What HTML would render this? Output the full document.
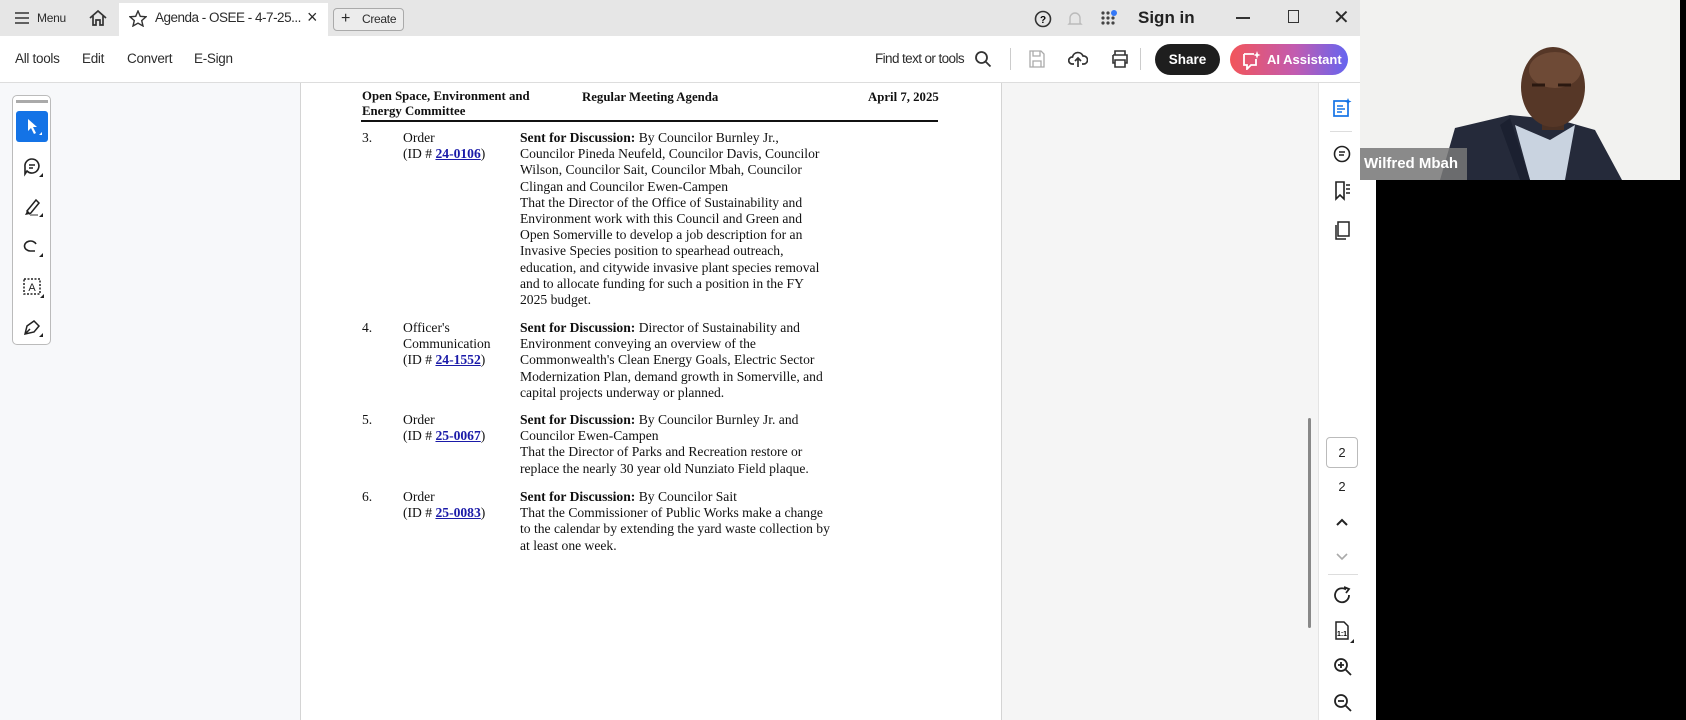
<!DOCTYPE html>
<html><head><meta charset="utf-8"><style>
*{margin:0;padding:0;box-sizing:border-box}
body{width:1686px;height:720px;overflow:hidden;position:relative;background:#fff;font-family:"Liberation Sans",sans-serif;color:#222}
.a{position:absolute}
.ui{font-size:13.5px;color:#2c2c2c;letter-spacing:-0.3px}
.doc{font-family:"Liberation Serif",serif;font-size:13.6px;line-height:16.2px;color:#111;white-space:nowrap}
.doc b{font-weight:bold}
.lk{color:#1a1aa8;text-decoration:underline;font-weight:bold}
svg{position:absolute}
</style></head><body>
<!-- tab bar -->
<div class="a" style="left:0;top:0;width:1360px;height:36px;background:#e6e6e6"></div>
<div class="a" style="left:119px;top:3px;width:209px;height:33px;background:#fff"></div>
<svg style="left:14px;top:11px" width="16" height="14"><path d="M1 2H15M1 7H15M1 12H15" stroke="#333" stroke-width="1.6"/></svg>
<div class="a ui" style="left:37px;top:11px;font-size:12px">Menu</div>
<svg style="left:88px;top:9px" width="20" height="18"><path d="M2 9L10 2L18 9M5 7V16H8V11H12V16H15V7" stroke="#333" stroke-width="1.7" fill="none"/></svg>
<svg style="left:129px;top:10px" width="18" height="17"><path d="M9 1L11.3 6.3L17 6.8L12.7 10.6L14 16L9 13.2L4 16L5.3 10.6L1 6.8L6.7 6.3Z" stroke="#333" stroke-width="1.4" fill="none"/></svg>
<div class="a ui" style="left:155px;top:10px;font-size:13.5px;letter-spacing:-0.5px">Agenda - OSEE - 4-7-25...</div>
<div class="a ui" style="left:307px;top:7px;font-size:18px">×</div>
<div class="a" style="left:333px;top:8px;width:71px;height:23px;border:1px solid #aaa;border-radius:4px;background:#ececec"></div>
<div class="a ui" style="left:341px;top:10px;font-size:16px">+</div>
<div class="a ui" style="left:362px;top:12px;font-size:12px">Create</div>
<svg style="left:1034px;top:10px" width="18" height="18"><circle cx="9" cy="9" r="7.5" stroke="#333" stroke-width="1.6" fill="none"/><text x="9" y="13" font-size="10" font-weight="bold" text-anchor="middle" font-family="Liberation Sans">?</text></svg>
<svg style="left:1067px;top:10px" width="16" height="18"><path d="M3 13V8A5 5 0 0 1 13 8V13L14 14H2Z" stroke="#bbb" fill="none" stroke-width="1.4"/></svg>
<svg style="left:1100px;top:10px" width="18" height="18"><g fill="#444"><circle cx="3" cy="3" r="1.6"/><circle cx="8" cy="3" r="1.6"/><circle cx="3" cy="8" r="1.6"/><circle cx="8" cy="8" r="1.6"/><circle cx="13" cy="8" r="1.6"/><circle cx="3" cy="13" r="1.6"/><circle cx="8" cy="13" r="1.6"/><circle cx="13" cy="13" r="1.6"/></g><circle cx="14" cy="3" r="3" fill="#3478f6"/></svg>
<div class="a" style="left:1138px;top:8px;font-size:17px;font-weight:bold;color:#222">Sign in</div>
<div class="a" style="left:1236px;top:17px;width:14px;height:2px;background:#333"></div>
<div class="a" style="left:1288px;top:10px;width:11px;height:13px;border:1.5px solid #333"></div>
<div class="a ui" style="left:1333px;top:5px;font-size:20px">✕</div>
<!-- toolbar -->
<div class="a" style="left:0;top:82px;width:1360px;height:1px;background:#ddd"></div>
<div class="a ui" style="left:15px;top:51px">All tools</div>
<div class="a ui" style="left:82px;top:51px">Edit</div>
<div class="a ui" style="left:127px;top:51px">Convert</div>
<div class="a ui" style="left:194px;top:51px">E-Sign</div>
<div class="a ui" style="left:875px;top:51px;letter-spacing:-0.6px">Find text or tools</div>
<svg style="left:974px;top:50px" width="18" height="18"><circle cx="7.5" cy="7.5" r="5.5" stroke="#333" stroke-width="1.8" fill="none"/><path d="M11.5 11.5L16.5 16.5" stroke="#333" stroke-width="1.8"/></svg>
<div class="a" style="left:1010px;top:48px;width:1px;height:22px;background:#ccc"></div>
<svg style="left:1029px;top:50px" width="16" height="18"><path d="M1 1H12L15 4V17H1Z M4 1V6H11V1 M4 17V11H12V17" stroke="#aaa" stroke-width="1.3" fill="none"/></svg>
<svg style="left:1068px;top:49px" width="20" height="20"><path d="M6 15H4A3.5 3.5 0 0 1 4.5 8A5.5 5.5 0 0 1 15 7A4 4 0 0 1 16 15H14M10 18V9M7 12L10 9L13 12" stroke="#333" stroke-width="1.7" fill="none"/></svg>
<svg style="left:1110px;top:49px" width="20" height="20"><path d="M5 6V2H15V6M3 6H17V14H15M5 14H3V6M5 11H15V18H5Z" stroke="#333" stroke-width="1.6" fill="none"/></svg>
<div class="a" style="left:1140px;top:48px;width:1px;height:22px;background:#ccc"></div>
<div class="a" style="left:1155px;top:44px;width:65px;height:31px;border-radius:16px;background:#1e1e1e;color:#fff;font-size:13.5px;font-weight:bold;text-align:center;line-height:31px">Share</div>
<div class="a" style="left:1230px;top:44px;width:118px;height:31px;border-radius:16px;background:linear-gradient(90deg,#f2555a,#c25bb0 55%,#6565f0);color:#fff;font-size:13px;font-weight:bold;line-height:31px;padding-left:37px">AI Assistant</div>
<svg style="left:1241px;top:50px" width="20" height="20"><path d="M3 4H13M3 4V15H6V19L10 15H15V9" stroke="#fff" stroke-width="1.8" fill="none"/><path d="M16 1L17 4L19.5 5L17 6L16 9L15 6L12.5 5L15 4Z" fill="#fff"/></svg>
<!-- content -->
<div class="a" style="left:0;top:83px;width:300px;height:637px;background:#f7f8fa"></div>
<div class="a" style="left:300px;top:83px;width:1px;height:637px;background:#d4d4d4"></div>
<div class="a" style="left:1001px;top:83px;width:317px;height:637px;background:#f5f5f5;border-left:1px solid #d4d4d4"></div>
<div class="a" style="left:1308px;top:418px;width:3px;height:210px;background:#888;border-radius:2px"></div>
<div class="a" style="left:1318px;top:83px;width:42px;height:637px;background:#fff;border-left:1px solid #e4e4e4"></div>
<!-- left tools -->
<div class="a" style="left:12px;top:95px;width:39px;height:250px;border:1px solid #bbb;border-radius:5px;background:#fff"></div>
<div class="a" style="left:16px;top:100px;width:32px;height:3px;background:#aaa"></div>
<div class="a" style="left:16px;top:111px;width:32px;height:31px;background:#1473e6;border-radius:3px"></div>
<svg style="left:26px;top:118px" width="18" height="18"><path d="M2 1L2 13L5 10L8 16L10 15L7 9L11 9Z" fill="#fff"/><path d="M16 14V17H13Z" fill="#fff"/></svg>
<svg style="left:22px;top:157px" width="24" height="22"><path d="M10 2A7 7 0 1 1 5 14L3 17L3 10A7 7 0 0 1 10 2Z" stroke="#222" stroke-width="1.6" fill="none"/><path d="M7 8H13M7 11H11" stroke="#222" stroke-width="1.5"/><path d="M21 16V20H17Z" fill="#222"/></svg>
<svg style="left:22px;top:197px" width="24" height="22"><path d="M5 14L14 3L17 6L8 17Z" stroke="#222" stroke-width="1.5" fill="none"/><path d="M3 18L5 14L8 17Z" fill="#222"/><path d="M8 18H16" stroke="#999" stroke-width="2"/><path d="M21 16V20H17Z" fill="#222"/></svg>
<svg style="left:22px;top:237px" width="24" height="22"><path d="M14 7A6 5 0 1 0 8 14H13" stroke="#222" stroke-width="1.6" fill="none"/><path d="M21 16V20H17Z" fill="#222"/></svg>
<svg style="left:22px;top:277px" width="24" height="22"><rect x="2" y="2" width="16" height="15" stroke="#222" stroke-width="1.5" stroke-dasharray="2 1.5" fill="none"/><text x="10" y="14" font-size="11" font-family="Liberation Sans" text-anchor="middle" fill="#222">A</text><path d="M22 17V21H18Z" fill="#222"/></svg>
<svg style="left:22px;top:317px" width="24" height="22"><path d="M3 17L5 9L12 4L17 9L12 15Z M3 17L8 12" stroke="#222" stroke-width="1.5" fill="none"/><path d="M21 16V20H17Z" fill="#222"/></svg>
<!-- document -->
<div class="a doc" style="left:362px;top:89px;font-weight:bold;font-size:12.8px;line-height:15.4px">Open Space, Environment and<br>Energy Committee</div>
<div class="a doc" style="left:582px;top:89px;font-weight:bold;font-size:12.8px">Regular Meeting Agenda</div>
<div class="a doc" style="left:868px;top:89px;font-weight:bold;font-size:12.8px">April 7, 2025</div>
<div class="a" style="left:361px;top:120px;width:577px;height:2px;background:#111"></div>

<div class="a doc" style="left:362px;top:130px">3.</div>
<div class="a doc" style="left:403px;top:130px">Order<br>(ID # <span class="lk">24-0106</span>)</div>
<div class="a doc" style="left:520px;top:130px"><b>Sent for Discussion:</b> By Councilor Burnley Jr.,<br>Councilor Pineda Neufeld, Councilor Davis, Councilor<br>Wilson, Councilor Sait, Councilor Mbah, Councilor<br>Clingan and Councilor Ewen-Campen<br>That the Director of the Office of Sustainability and<br>Environment work with this Council and Green and<br>Open Somerville to develop a job description for an<br>Invasive Species position to spearhead outreach,<br>education, and citywide invasive plant species removal<br>and to allocate funding for such a position in the FY<br>2025 budget.</div>

<div class="a doc" style="left:362px;top:320px">4.</div>
<div class="a doc" style="left:403px;top:320px">Officer's<br>Communication<br>(ID # <span class="lk">24-1552</span>)</div>
<div class="a doc" style="left:520px;top:320px"><b>Sent for Discussion:</b> Director of Sustainability and<br>Environment conveying an overview of the<br>Commonwealth's Clean Energy Goals, Electric Sector<br>Modernization Plan, demand growth in Somerville, and<br>capital projects underway or planned.</div>

<div class="a doc" style="left:362px;top:412px">5.</div>
<div class="a doc" style="left:403px;top:412px">Order<br>(ID # <span class="lk">25-0067</span>)</div>
<div class="a doc" style="left:520px;top:412px"><b>Sent for Discussion:</b> By Councilor Burnley Jr. and<br>Councilor Ewen-Campen<br>That the Director of Parks and Recreation restore or<br>replace the nearly 30 year old Nunziato Field plaque.</div>

<div class="a doc" style="left:362px;top:489px">6.</div>
<div class="a doc" style="left:403px;top:489px">Order<br>(ID # <span class="lk">25-0083</span>)</div>
<div class="a doc" style="left:520px;top:489px"><b>Sent for Discussion:</b> By Councilor Sait<br>That the Commissioner of Public Works make a change<br>to the calendar by extending the yard waste collection by<br>at least one week.</div>

<!-- right sidebar -->
<svg style="left:1332px;top:98px" width="20" height="20"><rect x="2" y="3" width="14" height="15" stroke="#1473e6" stroke-width="1.7" fill="none"/><path d="M5 8H11M5 11H13M5 14H10" stroke="#1473e6" stroke-width="1.5"/><path d="M16 0L17 2.5L19.5 3.5L17 4.5L16 7L15 4.5L12.5 3.5L15 2.5Z" fill="#1473e6"/></svg>
<div class="a" style="left:1330px;top:131px;width:22px;height:1px;background:#ddd"></div>
<svg style="left:1332px;top:144px" width="20" height="20"><circle cx="10" cy="10" r="7.5" stroke="#222" stroke-width="1.6" fill="none"/><path d="M7 8H13M7 11H12" stroke="#222" stroke-width="1.5"/></svg>
<svg style="left:1333px;top:181px" width="20" height="20"><path d="M3 1H11V18L7 14L3 18Z" stroke="#222" stroke-width="1.6" fill="none"/><path d="M13 4H17M13 8H17M13 12H17" stroke="#222" stroke-width="1.4"/></svg>
<svg style="left:1333px;top:221px" width="20" height="20"><rect x="5" y="1" width="11" height="14" stroke="#222" stroke-width="1.5" fill="none"/><path d="M3 4V18H13" stroke="#222" stroke-width="1.5" fill="none"/></svg>
<div class="a" style="left:1326px;top:437px;width:32px;height:31px;border:1px solid #bbb;border-radius:4px;text-align:center;line-height:29px;font-size:13px">2</div>
<div class="a" style="left:1326px;top:479px;width:32px;text-align:center;font-size:13px">2</div>
<svg style="left:1335px;top:517px" width="14" height="10"><path d="M2 8L7 3L12 8" stroke="#222" stroke-width="2" fill="none"/></svg>
<svg style="left:1335px;top:552px" width="14" height="10"><path d="M2 2L7 7L12 2" stroke="#aaa" stroke-width="1.6" fill="none"/></svg>
<div class="a" style="left:1328px;top:574px;width:30px;height:1px;background:#ddd"></div>
<svg style="left:1333px;top:586px" width="20" height="20"><path d="M16 9A7 7 0 1 1 13 3.5" stroke="#222" stroke-width="1.8" fill="none"/><path d="M11 1L16 3L13 7" stroke="#222" stroke-width="1.8" fill="none"/></svg>
<svg style="left:1333px;top:621px" width="22" height="22"><path d="M3 1H11L15 5V18H3Z" stroke="#222" stroke-width="1.5" fill="none"/><text x="9" y="15" font-size="7" font-weight="bold" text-anchor="middle" font-family="Liberation Sans">1:1</text><path d="M21 18V22H17Z" fill="#222"/></svg>
<svg style="left:1333px;top:657px" width="20" height="20"><circle cx="8" cy="8" r="6" stroke="#222" stroke-width="1.8" fill="none"/><path d="M12.5 12.5L18 18M5 8H11M8 5V11" stroke="#222" stroke-width="1.8"/></svg>
<svg style="left:1333px;top:693px" width="20" height="20"><circle cx="8" cy="8" r="6" stroke="#222" stroke-width="1.8" fill="none"/><path d="M12.5 12.5L18 18M5 8H11" stroke="#222" stroke-width="1.8"/></svg>
<!-- webcam -->
<div class="a" style="left:1360px;top:0;width:326px;height:720px;background:#000"></div>
<div class="a" style="left:1360px;top:180px;width:16px;height:540px;background:#fff"></div>
<svg style="left:1360px;top:0" width="320" height="180">
<rect width="320" height="180" fill="#f2f2f0"/>
<path d="M80 180L95 128L150 115L200 120L235 130L262 180Z" fill="#252a3a"/>
<path d="M155 125L170 180H205L215 125L190 140Z" fill="#c9d3e0"/>
<path d="M150 118L170 180L160 180L140 125Z" fill="#1b2030"/>
<rect x="182" y="110" width="22" height="20" fill="#4a3023"/>
<ellipse cx="193" cy="87" rx="32" ry="40" fill="#563727"/>
<ellipse cx="195" cy="70" rx="26" ry="18" fill="#6e4a36"/>
<path d="M172 85H185M198 85H211" stroke="#2a1810" stroke-width="3"/>
</svg>
<div class="a" style="left:1360px;top:148px;width:107px;height:32px;background:rgba(120,120,120,.85);color:#fff;font-weight:bold;font-size:15px;line-height:32px;padding-left:4px">Wilfred Mbah</div>
</body></html>
